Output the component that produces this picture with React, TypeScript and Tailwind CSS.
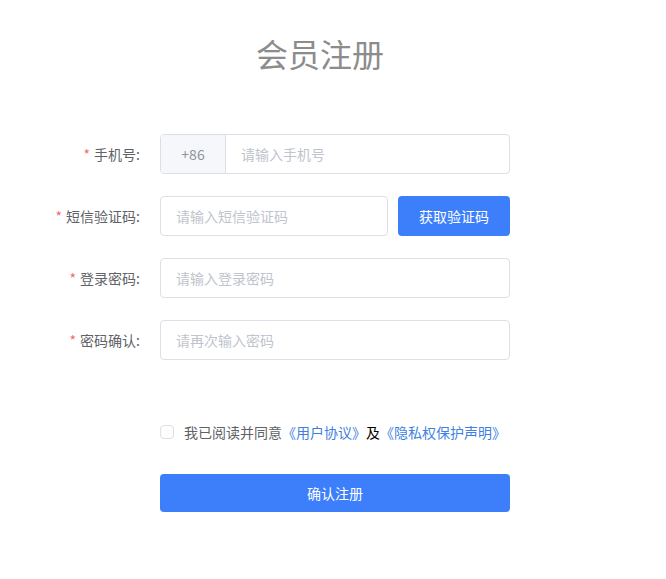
const font = { fontFamily: '"Noto Sans CJK SC", "Liberation Sans", sans-serif' };

const Label = ({ text }: { text: string }) => (
    <label className="w-[160px] pr-5 text-right text-sm text-[#606266] shrink-0">
        <span className="text-[#f56c6c] mr-1">*</span>
        {text}:
    </label>
)

const Input = ({ placeholder, className = "" }: { placeholder: string; className?: string }) => (
    <input
        placeholder={placeholder}
        className={"h-10 px-[15px] text-sm text-[#606266] placeholder:text-[#c0c4cc] border border-[#dcdfe6] rounded outline-none bg-white " + className}
    />
)

export default function App() {
    return (
        <div style={font} className="min-h-screen bg-white">
            <h1 className="text-[32px] leading-10 text-[#8c8c8c] text-center pt-[33px] mb-[61px] ml-[-26px]">会员注册</h1>

            <div className="flex flex-col gap-[22px]">
                <div className="flex items-center">
                    <Label text="手机号" />
                    <div className="flex w-[350px] h-10 border border-[#dcdfe6] rounded overflow-hidden">
                        <div className="w-[65px] shrink-0 bg-[#f5f7fa] border-r border-[#dcdfe6] flex items-center justify-center text-sm text-[#909399]">+86</div>
                        <input placeholder="请输入手机号" className="flex-1 min-w-0 px-[15px] text-sm text-[#606266] placeholder:text-[#c0c4cc] outline-none" />
                    </div>
                </div>

                <div className="flex items-center">
                    <Label text="短信验证码" />
                    <Input placeholder="请输入短信验证码" className="w-[228px]" />
                    <button className="ml-[10px] w-[112px] h-10 rounded bg-[#3d7ffb] text-white text-sm">获取验证码</button>
                </div>

                <div className="flex items-center">
                    <Label text="登录密码" />
                    <Input placeholder="请输入登录密码" className="w-[350px]" />
                </div>

                <div className="flex items-center">
                    <Label text="密码确认" />
                    <Input placeholder="请再次输入密码" className="w-[350px]" />
                </div>
            </div>

            <div className="ml-[160px] mt-[62px] h-5 flex items-center text-sm">
                <span className="w-[14px] h-[14px] border border-[#dcdfe6] rounded-sm bg-white"></span>
                <span className="ml-[10px] text-[#606266]">我已阅读并同意</span>
                <a className="text-[#3f7fe0]">《用户协议》</a>
                <span className="text-black">及</span>
                <a className="text-[#3f7fe0]">《隐私权保护声明》</a>
            </div>

            <button className="ml-[160px] mt-8 w-[350px] h-[38px] rounded bg-[#3d7ffb] text-white text-sm">确认注册</button>
        </div>
    )
}
